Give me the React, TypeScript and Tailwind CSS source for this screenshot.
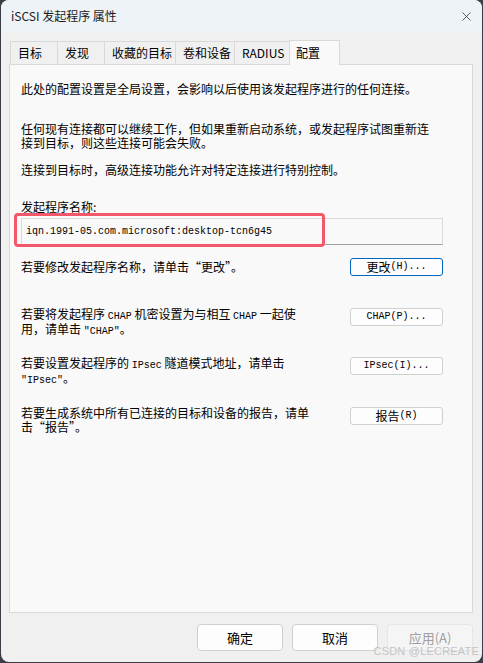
import { X } from "lucide-react";

const ui = { fontFamily: '"Noto Sans CJK SC", "Noto Sans", sans-serif' };
const mono = { fontFamily: '"Liberation Mono", "Noto Sans CJK SC", monospace' };

const tabs = [
  { label: "目标", w: "w-[48px]" },
  { label: "发现", w: "w-[48px]" },
  { label: "收藏的目标", w: "w-[72px]" },
  { label: "卷和设备", w: "w-[60px]" },
  { label: "RADIUS", w: "w-[56px]" },
];

// Latin bits in the dialog use the narrow SimSun-like half width
function L({ children }: { children: React.ReactNode }) {
  return (
    <span className="text-[10px] leading-[10px]" style={mono}>
      {children}
    </span>
  );
}

function PanelButton({ children, focus }: { children: React.ReactNode; focus?: boolean }) {
  return (
    <button
      className={
        "w-[93px] h-[18px] shrink-0 rounded-[3px] bg-[#fdfdfd] text-[12px] leading-[16px] text-black flex items-center justify-center " +
        (focus ? "border border-[#0067c0]" : "border border-[#d0d0d0]")
      }
      style={ui}
    >
      {children}
    </button>
  );
}

function FooterButton({ children, disabled }: { children: React.ReactNode; disabled?: boolean }) {
  return (
    <button
      className={
        "w-[86px] h-[27px] rounded-[4px] text-[13px] flex items-center justify-center " +
        (disabled
          ? "bg-[#f5f5f5] border border-[#e5e5e5] text-[#a0a0a0]"
          : "bg-[#fdfdfd] border border-[#d0d0d0] text-black")
      }
      style={ui}
    >
      {children}
    </button>
  );
}

export default function App() {
  return (
    <div className="w-[483px] h-[663px] bg-[#3d3d48] overflow-hidden" style={ui}>
      <div className="h-[662px] w-[481px] ml-[1px] rounded-[8px] bg-[#f0f0f0] overflow-hidden flex flex-col relative">
        {/* Title bar */}
        <div className="h-[32px] bg-[#eef3f8] flex items-center justify-between pl-[10px] pr-[8px] shrink-0">
          <span className="text-[12px] text-[#1a1a1a]">iSCSI 发起程序 属性</span>
          <X size={15} strokeWidth={1.1} className="text-[#1a1a1a]" />
        </div>

        {/* Body */}
        <div className="flex-1 flex flex-col pl-[8px] pr-[9px] pt-[8px]">
          {/* Tabs */}
          <div className="flex items-end h-[24px] pl-[1px] relative z-10">
            {tabs.map((t) => (
              <div
                key={t.label}
                className={
                  t.w +
                  " h-[23px] border border-b-0 border-[#d9d9d9] -ml-[1px] first:ml-0 bg-[#f0f0f0] text-[12px] text-black pl-[7px] flex items-center"
                }
              >
                {t.label}
              </div>
            ))}
            <div className="w-[51px] h-[25px] -mb-[1px] -ml-[1px] border border-b-0 border-[#d9d9d9] bg-[#f9f9f9] text-[12px] text-black pl-[6px] pt-[3px]">
              配置
            </div>
          </div>

          {/* Panel */}
          <div className="h-[549px] border border-[#d9d9d9] bg-[#f9f9f9] pl-[11px] pr-[29px] pt-[17px] text-[12px] text-black">
            <p className="h-[14px] leading-[14px] whitespace-nowrap">
              此处的配置设置是全局设置，会影响以后使用该发起程序进行的任何连接。
            </p>
            <p className="h-[28px] leading-[14px] whitespace-nowrap mt-[26px]">
              任何现有连接都可以继续工作，但如果重新启动系统，或发起程序试图重新连
              <br />
              接到目标，则这些连接可能会失败。
            </p>
            <p className="h-[14px] leading-[14px] whitespace-nowrap mt-[13px]">
              连接到目标时，高级连接功能允许对特定连接进行特别控制。
            </p>
            <p className="h-[14px] leading-[14px] whitespace-nowrap mt-[23px]">发起程序名称:</p>

            <div className="relative mt-[4px]">
              <div className="h-[27px] border border-[#dadada] border-b-[#a0a0a0] bg-[#f9f9f9] pl-[4px] flex items-center">
                <span className="text-[10px]" style={mono}>
                  iqn.1991-05.com.microsoft:desktop-tcn6g45
                </span>
              </div>
              <div className="absolute -left-[7px] -top-[5px] w-[311px] h-[34px] border-[3px] border-[#f2576a] rounded-[4px]" />
            </div>

            <div className="h-[18px] flex justify-between items-center mt-[13px]">
              <p className="leading-[14px] whitespace-nowrap">若要修改发起程序名称，请单击“更改”。</p>
              <PanelButton focus>
                更改<L>(H)...</L>
              </PanelButton>
            </div>

            <div className="h-[28px] flex justify-between items-start mt-[32px]">
              <p className="h-[28px] leading-[14px] whitespace-nowrap -mt-[1px]">
                若要将发起程序 <L>CHAP</L> 机密设置为与相互 <L>CHAP</L> 一起使
                <br />
                用，请单击 <L>"CHAP"</L>。
              </p>
              <PanelButton>
                <L>CHAP(P)...</L>
              </PanelButton>
            </div>

            <div className="h-[28px] flex justify-between items-start mt-[21px]">
              <p className="h-[28px] leading-[14px] whitespace-nowrap -mt-[1px]">
                若要设置发起程序的 <L>IPsec</L> 隧道模式地址，请单击
                <br />
                <L>"IPsec"</L>。
              </p>
              <PanelButton>
                <L>IPsec(I)...</L>
              </PanelButton>
            </div>

            <div className="h-[28px] flex justify-between items-start mt-[22px]">
              <p className="h-[28px] leading-[14px] whitespace-nowrap -mt-[1px]">
                若要生成系统中所有已连接的目标和设备的报告，请单
                <br />
                击“报告”。
              </p>
              <PanelButton>
                报告<L>(R)</L>
              </PanelButton>
            </div>
          </div>

          {/* Footer */}
          <div className="flex justify-end gap-[9px] pt-[11px]">
            <FooterButton>确定</FooterButton>
            <FooterButton>取消</FooterButton>
            <FooterButton disabled>应用(A)</FooterButton>
          </div>
        </div>

        {/* watermark */}
        <span
          className="absolute right-[3px] bottom-[5px] text-[11px] leading-[12px] text-[#c4c4c4] tracking-[0.2px]"
          style={{ fontFamily: '"Liberation Sans", sans-serif' }}
        >
          CSDN @LECREATE
        </span>
      </div>
    </div>
  );
}
